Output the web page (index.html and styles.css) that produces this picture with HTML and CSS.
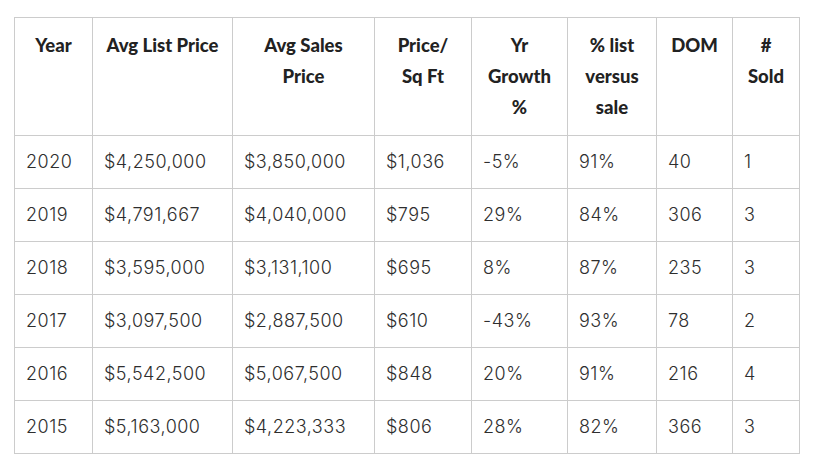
FILE: index.html
```html
<!DOCTYPE html>
<html>
<head>
<meta charset="utf-8">
<link rel="stylesheet" href="styles.css">
</head>
<body>
<div class="wrap">
<table class="sales">
<colgroup>
<col class="c1"><col class="c2"><col class="c3"><col class="c4"><col class="c5"><col class="c6"><col class="c7"><col class="c8">
</colgroup>
<thead>
<tr>
<th>Year</th>
<th>Avg List Price</th>
<th>Avg Sales Price</th>
<th>Price/ Sq&nbsp;Ft</th>
<th>Yr Growth %</th>
<th>% list versus sale</th>
<th>DOM</th>
<th># Sold</th>
</tr>
</thead>
<tbody>
<tr><td>2020</td><td>$4,250,000</td><td>$3,850,000</td><td>$1,036</td><td>-5%</td><td>91%</td><td>40</td><td>1</td></tr>
<tr><td>2019</td><td>$4,791,667</td><td>$4,040,000</td><td>$795</td><td>29%</td><td>84%</td><td>306</td><td>3</td></tr>
<tr><td>2018</td><td>$3,595,000</td><td>$3,131,100</td><td>$695</td><td>8%</td><td>87%</td><td>235</td><td>3</td></tr>
<tr><td>2017</td><td>$3,097,500</td><td>$2,887,500</td><td>$610</td><td>-43%</td><td>93%</td><td>78</td><td>2</td></tr>
<tr><td>2016</td><td>$5,542,500</td><td>$5,067,500</td><td>$848</td><td>20%</td><td>91%</td><td>216</td><td>4</td></tr>
<tr><td>2015</td><td>$5,163,000</td><td>$4,223,333</td><td>$806</td><td>28%</td><td>82%</td><td>366</td><td>3</td></tr>
</tbody>
</table>
</div>
</body>
</html>
```
FILE: styles.css
```css
html, body {
  margin: 0;
  padding: 0;
  background: #fff;
}
.wrap {
  padding: 17px 0 0 14px;
}
.sales {
  border-collapse: collapse;
  table-layout: fixed;
  width: 786px;
}
.c1 { width: 78px; }
.c2 { width: 140px; }
.c3 { width: 142px; }
.c4 { width: 97px; }
.c5 { width: 96px; }
.c6 { width: 89px; }
.c7 { width: 76px; }
.c8 { width: 67px; }
.sales th,
.sales td {
  border: 1px solid #cccccc;
  padding: 12px 11px;
  vertical-align: top;
}
.sales th {
  font-family: Lato, "Liberation Sans", sans-serif;
  font-weight: 900;
  font-size: 18.5px;
  line-height: 31px;
  color: #222;
  text-align: center;
  height: 93px;
}
.sales td {
  font-family: Inter, Lato, "Liberation Sans", sans-serif;
  font-weight: 300;
  font-size: 18px;
  letter-spacing: 0.5px;
  line-height: 28px;
  color: #2e2e2e;
  text-align: left;
  height: 28px;
}
```
